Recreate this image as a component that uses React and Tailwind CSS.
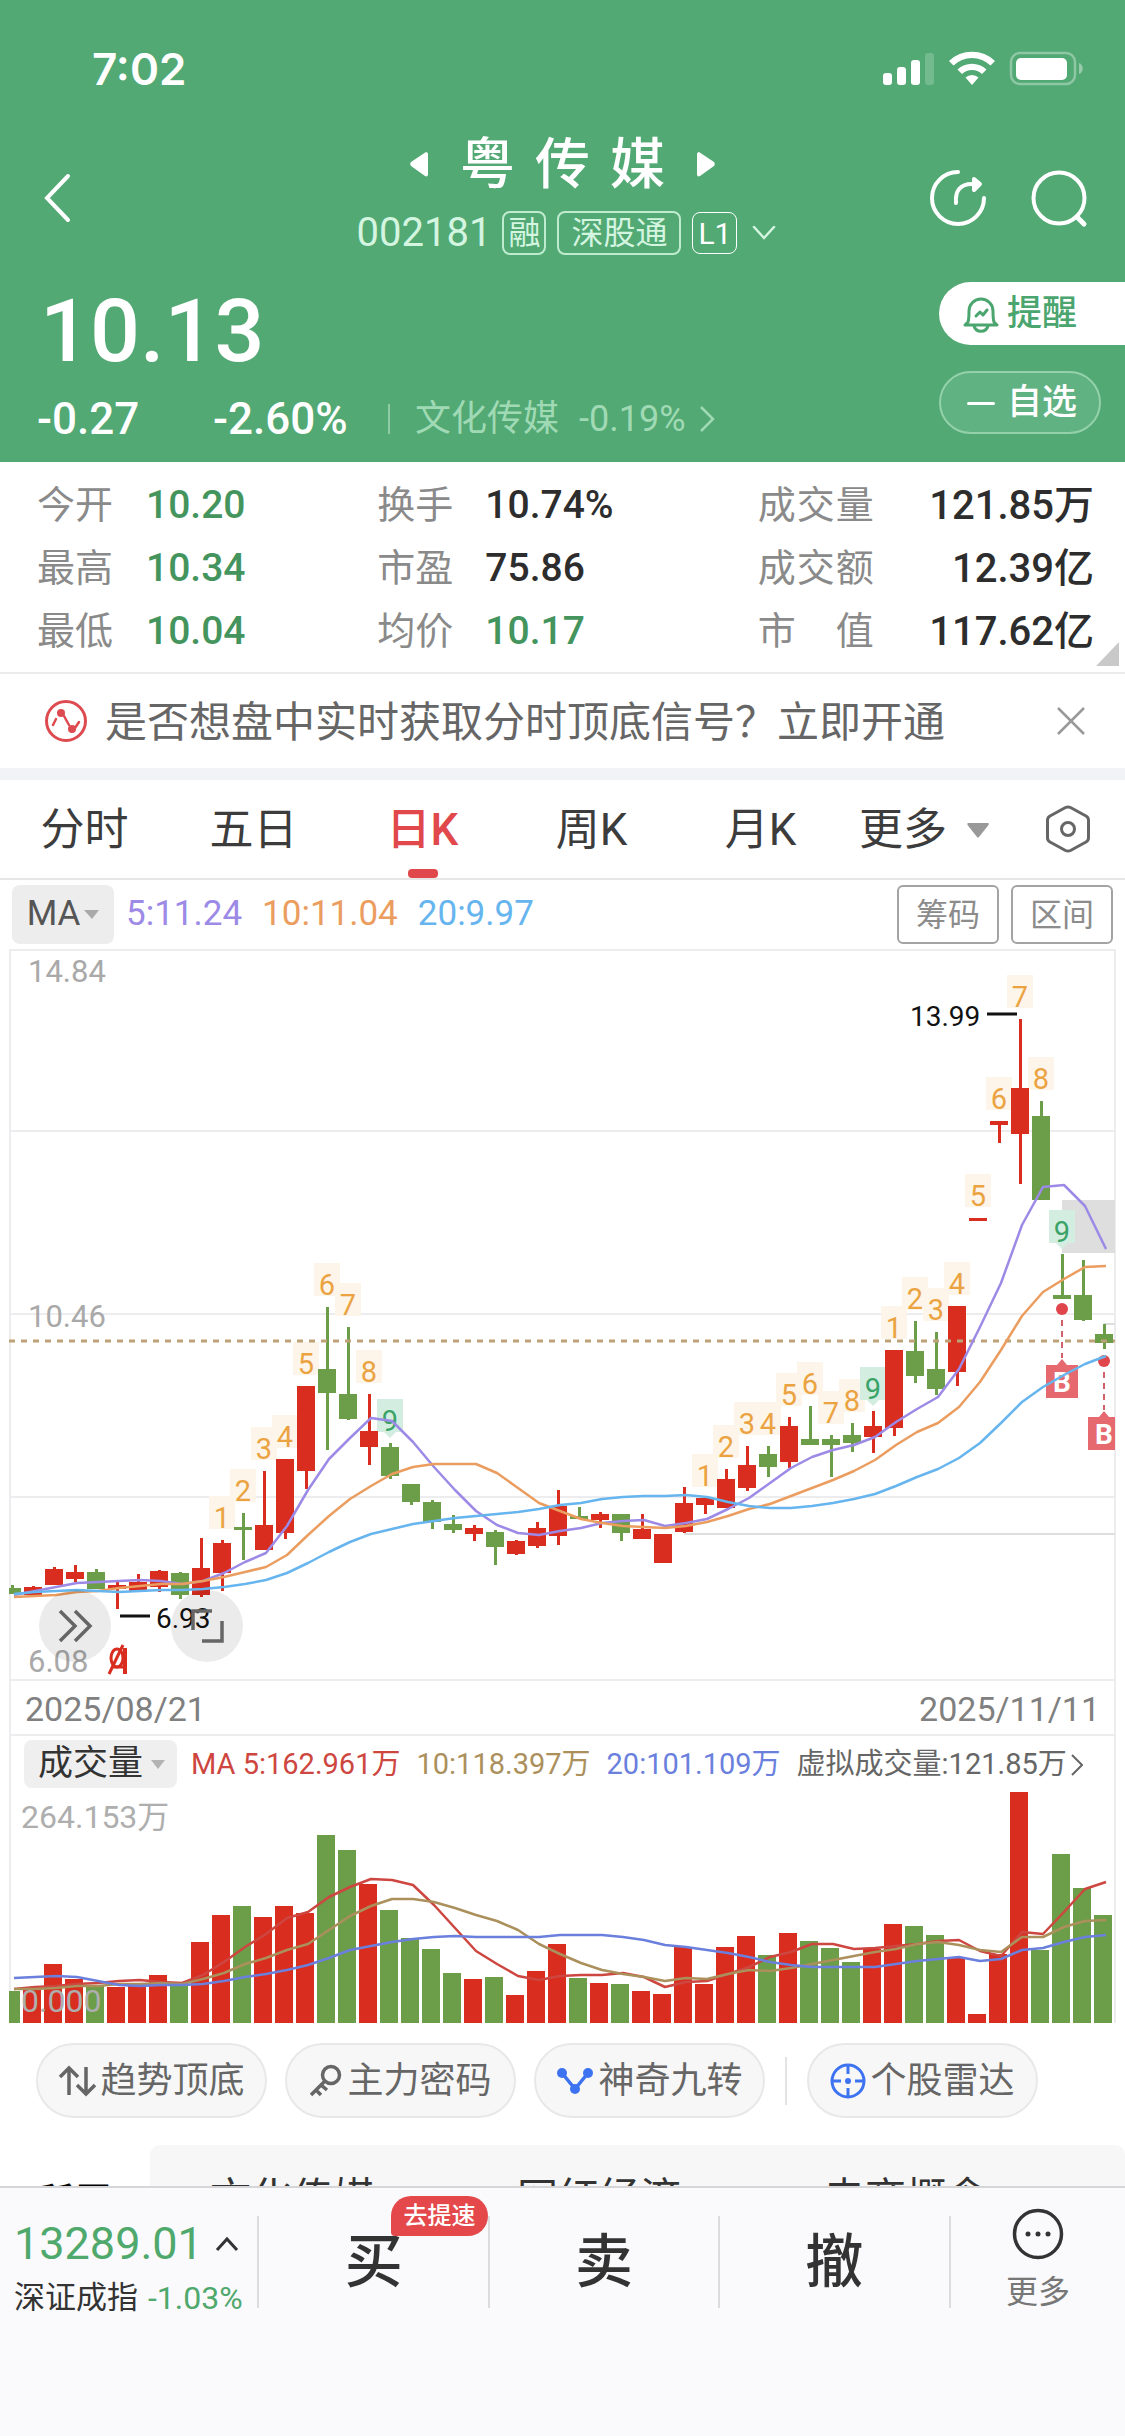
import React from "react";

const UP = "#d92d20";
const DOWN = "#6c9d48";

// [high, body top, body bottom, low, rising]
const candles = [
  [645, 648, 654, 654, 0],
  [646, 647, 655, 655, 1],
  [627, 629, 645, 645, 1],
  [625, 632, 639, 642, 1],
  [629, 632, 649, 649, 0],
  [642, 645, 649, 669, 1],
  [634, 642, 651, 651, 1],
  [630, 631, 647, 652, 1],
  [632, 633, 655, 659, 0],
  [598, 628, 655, 657, 1],
  [600, 603, 633, 651, 1],
  [573, 587, 590, 620, 0],
  [531, 585, 610, 610, 1],
  [519, 519, 593, 599, 1],
  [446, 446, 531, 549, 1],
  [367, 429, 453, 510, 0],
  [387, 454, 479, 480, 0],
  [454, 491, 507, 525, 1],
  [503, 507, 536, 539, 0],
  [544, 544, 562, 565, 0],
  [560, 562, 582, 589, 0],
  [575, 584, 590, 593, 0],
  [585, 588, 594, 601, 1],
  [590, 592, 607, 625, 0],
  [600, 601, 614, 615, 1],
  [582, 588, 606, 608, 1],
  [550, 566, 596, 605, 1],
  [567, 576, 579, 579, 0],
  [572, 574, 580, 588, 1],
  [574, 574, 593, 601, 0],
  [574, 589, 599, 599, 1],
  [594, 594, 623, 623, 1],
  [547, 563, 592, 593, 1],
  [558, 558, 565, 574, 1],
  [529, 539, 568, 568, 1],
  [506, 525, 548, 551, 1],
  [506, 514, 527, 537, 0],
  [477, 486, 522, 528, 1],
  [466, 499, 505, 505, 0],
  [495, 499, 505, 537, 0],
  [483, 495, 503, 512, 0],
  [471, 486, 497, 513, 1],
  [410, 410, 488, 496, 1],
  [381, 411, 436, 443, 0],
  [392, 429, 449, 455, 0],
  [366, 366, 432, 446, 1],
  [278, 278, 281, 281, 1],
  [181, 181, 185, 203, 1],
  [79, 148, 194, 244, 1],
  [161, 176, 260, 260, 0],
  [314, 355, 359, 359, 0],
  [320, 355, 380, 381, 0],
  [384, 394, 403, 409, 0],
];

const ma5 = [
  655, 651, 647, 643, 642, 641, 640, 641, 644, 641, 633, 622, 613, 586, 550,
  519, 498, 478, 481, 502, 527, 550, 571, 585, 593, 595, 591, 588, 583, 581,
  580, 586, 583, 579, 569, 558, 543, 528, 517, 510, 505, 497, 482, 469, 457,
  429, 387, 343, 285, 247, 245, 266, 309,
];
const ma10 = [
  657, 656, 655, 652, 651, 648, 646, 644, 644, 641, 637, 632, 627, 615, 595,
  576, 559, 546, 534, 527, 524, 524, 524, 533, 548, 563, 571, 579, 583, 586,
  587, 588, 586, 582, 576, 569, 564, 556, 548, 540, 531, 520, 505, 492, 483,
  467, 442, 410, 376, 352, 339, 327, 326,
];
const ma20 = [
  654, 652, 651, 650, 651, 652, 651, 650, 650, 649, 647, 644, 640, 633, 623,
  612, 602, 594, 589, 584, 581, 578, 576, 574, 572, 569, 565, 563, 559, 557,
  556, 556, 555, 557, 562, 566, 568, 568, 566, 563, 559, 554, 546, 537, 529,
  518, 503, 483, 462, 447, 435, 424, 416,
];

// index of the first candle of each nine-turn sequence
const sequences = [10, 33, 42];

const volumes = [
  291, 287, 264, 279, 286, 287, 286, 275, 286, 242, 215, 206, 217, 206, 213,
  135, 150, 184, 210, 238, 249, 273, 279, 277, 295, 271, 244, 278, 283, 284,
  291, 294, 247, 284, 247, 236, 255, 233, 241, 248, 262, 249, 224, 226, 235,
  258, 314, 254, 92, 250, 154, 188, 215,
];
const vol5 = [
  289, 287, 286, 284, 283, 281, 280, 282, 283, 275, 262, 247, 234, 218, 212,
  197, 187, 179, 180, 185, 205, 228, 251, 264, 276, 280, 276, 275, 275, 273,
  277, 287, 282, 281, 274, 267, 257, 252, 244, 244, 249, 248, 246, 244, 241,
  240, 251, 256, 232, 234, 212, 189, 182,
];
const vol10 = [
  289, 289, 288, 286, 286, 284, 284, 283, 284, 279, 273, 264, 258, 250, 244,
  230, 216, 206, 199, 199, 202, 208, 215, 221, 230, 244, 254, 263, 270, 274,
  277, 281, 278, 279, 274, 270, 271, 268, 264, 260, 256, 252, 249, 244, 242,
  245, 250, 252, 237, 237, 227, 221, 220,
];
const vol20 = [
  278, 277, 276, 277, 281, 285, 286, 285, 285, 284, 281, 277, 274, 270, 265,
  258, 250, 246, 242, 239, 237, 236, 237, 237, 237, 237, 235, 235, 235, 237,
  240, 245, 247, 250, 253, 257, 262, 265, 267, 267, 267, 267, 264, 261, 259,
  257, 261, 259, 250, 248, 242, 237, 235,
];

const stats = [
  ["今开", "10.20", "换手", "10.74%", "成交量", "121.85万"],
  ["最高", "10.34", "市盈", "75.86", "成交额", "12.39亿"],
  ["最低", "10.04", "均价", "10.17", "市值", "117.62亿"],
];

function MaLine({ values, color }) {
  return (
    <polyline
      points={values.map((y, i) => `${14 + i * 21},${y}`).join(" ")}
      fill="none"
      stroke={color}
      strokeWidth="2.5"
      strokeLinejoin="round"
    />
  );
}

function StatusBar() {
  return (
    <div className="flex h-[130px] items-center justify-between pt-2 pr-10 pl-[92px]">
      <span className="font-['Inter',sans-serif] text-[44px] leading-none font-semibold">
        7:02
      </span>
      <svg width="202" height="36" viewBox="0 0 202 36" fill="#fff">
        <rect x="0" y="22" width="9" height="12" rx="3" />
        <rect x="14" y="16" width="9" height="18" rx="3" />
        <rect x="28" y="9" width="9" height="25" rx="3" />
        <rect x="42" y="2" width="9" height="32" rx="3" opacity="0.2" />
        <path d="M66 10a33 33 0 0 1 46 0l-4.500 4.500a26.500 26.500 0 0 0-37 0z" />
        <path d="M74.500 18.500a21 21 0 0 1 29 0l-4.500 4.500a14.500 14.500 0 0 0-20 0z" />
        <path d="M82.500 26.500a9.500 9.500 0 0 1 13 0L89 34z" />
        <rect
          x="128"
          y="2"
          width="64"
          height="31"
          rx="9"
          fill="none"
          stroke="#fff"
          strokeWidth="2.500"
          opacity="0.35"
        />
        <rect x="133" y="7" width="51" height="22" rx="5" />
        <path d="M196 12c5 1.500 5 9.500 0 11z" opacity="0.4" />
      </svg>
    </div>
  );
}

function Header() {
  return (
    <header className="bg-[#52a974] text-white">
      <StatusBar />
      <div className="grid h-[136px] grid-cols-[1fr_auto_1fr] items-center">
        <button aria-label="返回" className="ml-10 w-9">
          <svg width="36" height="52" viewBox="0 0 36 52" fill="none">
            <path
              d="M28 4 7 26l21 22"
              stroke="#fff"
              strokeWidth="4"
              strokeLinecap="round"
            />
          </svg>
        </button>
        <div className="flex flex-col items-center gap-4 pb-2">
          <div className="flex items-center gap-8">
            <button aria-label="上一只">
              <svg width="18" height="26" viewBox="0 0 18 26" fill="#fff">
                <path d="M16 1c1 0 2 1 2 2v20c0 2-1 3-3 2L1 15c-1-1-1-3 0-4z" />
              </svg>
            </button>
            <h1 className="flex gap-5 text-[55px] leading-[62px] font-medium">
              <span>粤</span>
              <span>传</span>
              <span>媒</span>
            </h1>
            <button aria-label="下一只">
              <svg width="18" height="26" viewBox="0 0 18 26" fill="#fff">
                <path d="M2 1C1 1 0 2 0 3v20c0 2 1 3 3 2l14-10c1-1 1-3 0-4z" />
              </svg>
            </button>
          </div>
          <div className="flex h-11 items-center gap-[11px] pl-2 text-[32px] text-[#d4f5e0]">
            <span className="text-[40px]">002181</span>
            <span className="flex h-11 w-11 items-center justify-center rounded-lg border-2 border-[#bfeccf]">
              融
            </span>
            <span className="flex h-11 items-center rounded-lg border-2 border-[#bfeccf] px-3">
              深股通
            </span>
            <span className="flex h-[42px] w-[45px] items-center justify-center rounded-lg border border-white text-[30px] text-white">
              L1
            </span>
            <button aria-label="展开" className="ml-1">
              <svg width="24" height="16" viewBox="0 0 24 16" fill="none">
                <path
                  d="m2 2 10 11L22 2"
                  stroke="#d4f5e0"
                  strokeWidth="2.500"
                  strokeLinecap="round"
                />
              </svg>
            </button>
          </div>
        </div>
        <div className="flex items-center justify-end gap-11 pr-[37px]">
          <button aria-label="分享">
            <svg
              width="58"
              height="60"
              viewBox="0 0 58 60"
              fill="none"
              stroke="#fff"
              strokeWidth="4"
              strokeLinecap="round"
              strokeLinejoin="round"
            >
              <path d="M30 4a26 26 0 1 0 26 26" />
              <path d="M28 35c-1-12 4-19 16-19h6" />
              <path d="m46 11 6 5-6 6z" fill="#fff" />
            </svg>
          </button>
          <button aria-label="搜索">
            <svg
              width="58"
              height="60"
              viewBox="0 0 58 60"
              fill="none"
              stroke="#fff"
              strokeLinecap="round"
            >
              <circle cx="29" cy="30" r="25.500" strokeWidth="4" />
              <path d="m47 49 7 7" strokeWidth="5" />
            </svg>
          </button>
        </div>
      </div>

      <div className="flex justify-between pt-4 pb-[18px]">
        <div>
          <div className="pl-10 text-[88px] leading-[98px] font-medium">
            10.13
          </div>
          <div className="mt-[14px] flex h-[50px] items-center pl-[37px] text-[44px] font-medium">
            <span className="w-[176px]">-0.27</span>
            <span className="w-[175px]">-2.60%</span>
            <a
              href="#sector"
              className="flex items-center text-[36px] font-normal text-[#a0dab5]"
            >
              <span className="mr-[25px] h-[30px] w-[2px] bg-[#8fcca6]"></span>
              文化传媒
              <span className="ml-5">-0.19%</span>
              <svg
                className="ml-3"
                width="18"
                height="30"
                viewBox="0 0 18 30"
                fill="none"
              >
                <path d="m3 3 12 12L3 27" stroke="#a0dab5" strokeWidth="2.500" />
              </svg>
            </a>
          </div>
        </div>
        <div className="flex w-[186px] flex-col gap-[26px]">
          <button className="flex h-[63px] items-center gap-2 rounded-l-full bg-white pt-[2px] pl-6 text-[35px] font-medium text-[#4aa56e]">
            <svg
              width="36"
              height="38"
              viewBox="0 0 36 38"
              fill="none"
              stroke="#4aa56e"
              strokeWidth="3"
              strokeLinecap="round"
              strokeLinejoin="round"
            >
              <path d="M5 26c1-3 1-6 1-11a12 12 0 0 1 24 0c0 5 0 8 1 11l3 3H2z" />
              <path d="M11 30c2 7 12 7 14 0M13 20l4-4 3 3 4-5" />
            </svg>
            提醒
          </button>
          <button className="flex h-[63px] w-[162px] items-center gap-3 rounded-full border-2 border-[#93d1aa] bg-[#60b282] pt-[2px] pl-[26px] text-[35px] font-medium">
            <span className="h-[3px] w-7 rounded bg-white"></span>
            自选
          </button>
        </div>
      </div>
    </header>
  );
}

function Stats() {
  return (
    <dl className="relative border-b-2 border-[#ebebeb] pt-3 pr-[31px] pb-[9px] pl-[37px]">
      {stats.map(([a, av, b, bv, c, cv], i) => (
        <div
          key={a}
          className="grid h-[63px] grid-cols-[340fr_380fr_336fr] items-center text-[40px] font-medium text-[#2d2d2d]"
        >
          <div className="flex items-center">
            <dt className="w-[109px] text-[38px] font-normal text-[#8a8a8a]">
              {a}
            </dt>
            <dd className="text-[39px] text-[#44945e]">{av}</dd>
          </div>
          <div className="flex items-center text-[39px]">
            <dt className="w-[108px] text-[38px] font-normal text-[#8a8a8a]">
              {b}
            </dt>
            <dd className={i === 2 ? "text-[#44945e]" : ""}>{bv}</dd>
          </div>
          <div className="flex items-center justify-between">
            <dt className="flex w-[116px] justify-between text-[38px] font-normal text-[#8a8a8a]">
              {c.split("").map((ch) => (
                <span key={ch}>{ch}</span>
              ))}
            </dt>
            <dd>{cv}</dd>
          </div>
        </div>
      ))}
      <svg
        className="absolute right-[6px] bottom-[6px]"
        width="23"
        height="24"
        viewBox="0 0 23 24"
      >
        <path d="M23 0v24H0z" fill="#c9c9c9" />
      </svg>
    </dl>
  );
}

function Notice() {
  return (
    <div className="flex h-[94px] items-center pr-[38px] pl-11">
      <svg width="44" height="44" viewBox="0 0 44 44" fill="none">
        <circle cx="22" cy="22" r="19.500" stroke="#dd4a4f" strokeWidth="3" />
        <path
          d="m9 26 3-6M20 17l5 9M31 29l4-6"
          stroke="#dd4a4f"
          strokeWidth="2.500"
          strokeLinecap="round"
        />
        <circle cx="17" cy="14" r="4" fill="#dd4a4f" />
        <circle cx="28" cy="30" r="4" fill="#dd4a4f" />
      </svg>
      <a href="#open" className="ml-[17px] flex-1 pt-[2px] text-[42px] text-[#666]">
        是否想盘中实时获取分时顶底信号？立即开通
      </a>
      <button aria-label="关闭">
        <svg width="32" height="32" viewBox="0 0 32 32" fill="none">
          <path d="m3 3 26 26M29 3 3 29" stroke="#999" strokeWidth="2.500" />
        </svg>
      </button>
    </div>
  );
}

function Tabs() {
  return (
    <nav className="grid h-[100px] grid-cols-[845fr_280fr] border-b-2 border-[#e6e6e6] text-[44px] text-[#3c3c3c]">
      <div className="grid grid-cols-5">
        {["分时", "五日", "日K", "周K", "月K"].map((tab) =>
          tab === "日K" ? (
            <button
              key={tab}
              className="relative pt-[2px] font-medium text-[#e0484b]"
            >
              {tab}
              <span className="absolute bottom-0 left-1/2 h-[9px] w-[30px] -translate-x-1/2 rounded bg-[#e0484b]"></span>
            </button>
          ) : (
            <button key={tab} className="pt-[2px]">
              {tab}
            </button>
          )
        )}
      </div>
      <div className="flex items-center justify-between pr-8 pl-[14px]">
        <button className="flex items-center gap-5 pt-[2px]">
          更多
          <svg width="22" height="15" viewBox="0 0 22 15" fill="#999">
            <path d="M1 0h20c1 0 1 1 .5 2L12 14q-1 1-2 0L.5 2Q0 0 1 0" />
          </svg>
        </button>
        <button aria-label="设置">
          <svg
            width="50"
            height="50"
            viewBox="0 0 50 50"
            fill="none"
            stroke="#666"
            strokeWidth="3"
            strokeLinejoin="round"
          >
            <path d="M22.500 3.500q2.500-1.200 5 0L43 12q2.500 1.500 2.500 4v18q0 2.500-2.500 4l-15.500 8.500q-2.500 1.200-5 0L7 38q-2.500-1.500-2.500-4V16q0-2.500 2.500-4z" />
            <circle cx="25" cy="25" r="6.500" />
          </svg>
        </button>
      </div>
    </nav>
  );
}

function TurnLabel({ x, high, n }) {
  const last = n === 9;
  return (
    <>
      <rect
        x={x - 13}
        y={high - 44}
        width="26"
        height="33"
        fill={last ? "#d3eee0" : "#fdf5e9"}
      />
      {last && (
        <path
          d={`M${x - 6} ${high - 11}h12l-6 6z`}
          fill="#d3eee0"
        />
      )}
      <text
        x={x}
        y={high - 12}
        fontSize="29"
        textAnchor="middle"
        fill={last ? "#3ba368" : "#eba342"}
      >
        {n}
      </text>
    </>
  );
}

function BuyMark({ x, y }) {
  return (
    <>
      <circle cx={x} cy={y} r="6" fill="#e0454c" />
      <path
        d={`M${x} ${y + 11}v38`}
        stroke="#d0606a"
        strokeWidth="2"
        strokeDasharray="6 5"
      />
      <path
        d={`M${x - 16} ${y + 56}h11l5-6 5 6h11v33h-32z`}
        fill="#e5696e"
      />
      <text
        x={x}
        y={y + 83}
        fontSize="28"
        fontWeight="700"
        textAnchor="middle"
        fill="#fff"
      >
        B
      </text>
    </>
  );
}

function PriceChart() {
  return (
    <div className="relative">
      <svg viewBox="0 8 1125 734" className="block w-full">
        <clipPath id="plot">
          <rect x="9" y="8" width="1106" height="734" />
        </clipPath>
        <g stroke="#ededef" strokeWidth="2">
          {[10, 191, 374, 557, 740].map((y) => (
            <path key={y} d={`M10 ${y}H1115`} />
          ))}
          <path d="M10 9V742M1115 9V742" />
          <path d="M684 594H1115M1104 384H1115" stroke="#dedede" />
        </g>
        <rect x="1062" y="260" width="53" height="53" fill="#dededf" />
        <g clipPath="url(#plot)">
          {sequences.map((start) =>
            [1, 2, 3, 4, 5, 6, 7, 8, 9].map((n) => {
              const i = start + n - 1;
              return (
                <TurnLabel key={i} x={12 + i * 21} high={candles[i][0]} n={n} />
              );
            })
          )}
          {candles.map(([high, top, bottom, low, rising], i) => (
            <g key={i} fill={rising ? UP : DOWN}>
              <rect x={11 + i * 21} y={high} width="3" height={low - high} />
              <rect x={3 + i * 21} y={top} width="18" height={bottom - top} />
            </g>
          ))}
          <path
            d="M9 401H1115"
            stroke="#bda177"
            strokeWidth="3"
            strokeDasharray="6 6"
          />
          <BuyMark x={1062} y={369} />
          <BuyMark x={1104} y={421} />
        </g>
        <MaLine values={ma5} color="#9c8ae6" />
        <MaLine values={ma10} color="#eb9d60" />
        <MaLine values={ma20} color="#66b5ee" />

        <path d="M987 74h30M120 676h30" stroke="#111" strokeWidth="3" />
        <g fontSize="28" fill="#111">
          <text x="910" y="86">
            13.99
          </text>
          <text x="156" y="688">
            6.93
          </text>
        </g>
        <g fontSize="31" fill="#a9a9a9">
          <text x="28" y="42">
            14.84
          </text>
          <text x="28" y="387">
            10.46
          </text>
          <text x="28" y="732">
            6.08
          </text>
        </g>
        <g fill="none" stroke={UP} strokeWidth="3">
          <ellipse cx="117" cy="718" rx="6" ry="9" />
          <path d="M125 708v26" strokeWidth="4" />
          <path d="m123 705-14 29M112 727h13" />
        </g>
      </svg>
      <button
        aria-label="快进"
        className="absolute bottom-5 left-[39px] flex h-[72px] w-[72px] items-center justify-center rounded-full bg-black/8"
      >
        <svg
          width="36"
          height="36"
          viewBox="0 0 36 36"
          fill="none"
          stroke="#666"
          strokeWidth="3.500"
        >
          <path d="m3 3 15 15L3 33M18 3l15 15-15 15" />
        </svg>
      </button>
      <button
        aria-label="全屏"
        className="absolute bottom-5 left-[171px] flex h-[72px] w-[72px] items-center justify-center rounded-full bg-black/8"
      >
        <svg
          width="36"
          height="36"
          viewBox="0 0 36 36"
          fill="none"
          stroke="#666"
          strokeWidth="3.500"
        >
          <path d="M23 3H4v19M13 33h20V13" />
        </svg>
      </button>
    </div>
  );
}

function VolumeChart() {
  return (
    <svg viewBox="0 92 1125 232" className="block w-full">
      <path d="M10 92V323M1115 92V323" stroke="#ededef" strokeWidth="2" />
      <clipPath id="volume">
        <rect x="9" y="92" width="1106" height="232" />
      </clipPath>
      <g clipPath="url(#volume)">
        {volumes.map((y, i) => (
          <rect
            key={i}
            x={2 + i * 21}
            y={y}
            width="18"
            height={323 - y}
            fill={candles[i][4] ? UP : DOWN}
          />
        ))}
      </g>
      <MaLine values={vol5} color="#cd4640" />
      <MaLine values={vol10} color="#ab905c" />
      <MaLine values={vol20} color="#6b7fdd" />
      <g fontSize="32" fill="#aeaeae">
        <text x="21" y="128">
          264.153万
        </text>
        <text x="21" y="312">
          0.000
        </text>
      </g>
    </svg>
  );
}

function Indicators() {
  return (
    <section>
      <div className="flex h-[68px] items-start justify-between pt-[5px] pr-3 pl-3">
        <div className="flex items-center gap-5 text-[35px]">
          <button className="-mr-2 flex h-[59px] w-[102px] items-center justify-center gap-1 rounded-lg bg-[#ededed] text-[#555]">
            MA
            <svg width="15" height="9" viewBox="0 0 15 9" fill="#aaa">
              <path d="M0 0h15L8 9z" />
            </svg>
          </button>
          <span className="text-[#9c8ae6]">5:11.24</span>
          <span className="text-[#eb9d60]">10:11.04</span>
          <span className="text-[#66b5ee]">20:9.97</span>
        </div>
        <div className="flex gap-3 text-[32px] text-[#8c8c8c]">
          <button className="h-[59px] w-[102px] rounded-md border-2 border-[#a3a3a3]">
            筹码
          </button>
          <button className="h-[59px] w-[102px] rounded-md border-2 border-[#a3a3a3]">
            区间
          </button>
        </div>
      </div>
      <PriceChart />
      <div className="mx-[9px] flex h-[54px] items-center justify-between border-x-2 border-b-2 border-[#ededef] px-[14px] pt-[2px] text-[34px] text-[#808080]">
        <span>2025/08/21</span>
        <span>2025/11/11</span>
      </div>
      <div className="mx-[9px] flex h-14 items-center gap-4 border-x-2 border-[#ededef] pl-[13px] text-[29px] whitespace-nowrap">
        <button className="-mr-[2px] flex h-12 items-center gap-2 rounded-lg bg-[#efefef] pr-3 pl-[14px] text-[35px] text-[#333]">
          成交量
          <svg width="14" height="9" viewBox="0 0 14 9" fill="#b3b3b3">
            <path d="M0 0h14L7 9z" />
          </svg>
        </button>
        <span className="pt-[2px] text-[#cd4640]">MA 5:162.961万</span>
        <span className="pt-[2px] text-[#ab905c]">10:118.397万</span>
        <span className="pt-[2px] text-[#6b7fdd]">20:101.109万</span>
        <a href="#virtual" className="flex items-center gap-1 pt-[2px] text-[#666]">
          虚拟成交量:121.85万
          <svg width="12" height="22" viewBox="0 0 12 22" fill="none">
            <path d="m1 1 10 10L1 21" stroke="#666" strokeWidth="2" />
          </svg>
        </a>
      </div>
      <VolumeChart />
    </section>
  );
}

function Pill({ icon, children }) {
  return (
    <button className="flex h-[75px] w-[231px] items-center justify-center gap-1 rounded-full border-2 border-[#e8e8e8] bg-[#f7f7f7] text-[#666]">
      {icon}
      {children}
    </button>
  );
}

function Shortcuts() {
  return (
    <div className="flex items-center gap-[18px] pt-[19px] pl-9 text-[36px]">
      <Pill
        icon={
          <svg
            width="38"
            height="32"
            viewBox="0 0 38 32"
            fill="none"
            stroke="#666"
            strokeWidth="3.5"
          >
            <path d="M11 30V3M2 12l9-9 9 9M28 2v27M19 20l9 9 9-9" />
          </svg>
        }
      >
        趋势顶底
      </Pill>
      <Pill
        icon={
          <svg
            width="34"
            height="34"
            viewBox="0 0 34 34"
            fill="none"
            stroke="#666"
            strokeWidth="3.5"
          >
            <circle cx="22" cy="11" r="8.500" />
            <path d="M16 17 2 31M12 21l6 5M7 26l5 5" />
          </svg>
        }
      >
        主力密码
      </Pill>
      <Pill
        icon={
          <svg width="38" height="28" viewBox="0 0 38 28" fill="#3d73f0">
            <path
              d="m6 6 13 16L32 6"
              fill="none"
              stroke="#3d73f0"
              strokeWidth="3.5"
            />
            <circle cx="6" cy="6" r="5" />
            <circle cx="19" cy="22" r="5" />
            <circle cx="32" cy="6" r="5" />
          </svg>
        }
      >
        神奇九转
      </Pill>
      <span className="mx-[2px] h-12 w-[2px] bg-[#e3e3e3]"></span>
      <Pill
        icon={
          <svg
            width="36"
            height="36"
            viewBox="0 0 36 36"
            fill="none"
            stroke="#3d73f0"
            strokeWidth="3"
          >
            <circle cx="18" cy="18" r="16" />
            <path d="M18 2v9M18 25v9M2 18h9M25 18h9" />
            <circle cx="18" cy="18" r="3" fill="#3d73f0" stroke="none" />
          </svg>
        }
      >
        个股雷达
      </Pill>
    </div>
  );
}

function Concepts() {
  return (
    <div className="mt-[27px] flex h-[41px] overflow-hidden text-[41px] text-[#333]">
      <span className="w-[150px] pt-[35px] pl-9 text-[38px] leading-[44px] font-bold text-black">
        所属
      </span>
      <div className="grid h-[120px] flex-1 grid-cols-[307fr_307fr_361fr] rounded-[10px] bg-[#f7f7f8] pt-[31px] leading-[44px]">
        <span className="pl-[60px]">文化传媒</span>
        <span className="pl-[60px]">网红经济</span>
        <span className="pl-[60px]">电商概念</span>
      </div>
    </div>
  );
}

function TradeBar() {
  return (
    <footer className="flex h-[250px] items-start border-t-2 border-[#d6d6d8] bg-[#fafafc] pt-7 text-[#333]">
      <button className="flex h-[101px] w-[257px] flex-col justify-between pl-[14px] text-left whitespace-nowrap">
        <span className="flex items-center gap-3 text-[45px] leading-[56px] text-[#4fa86c]">
          13289.01
          <svg width="24" height="16" viewBox="0 0 24 16" fill="none">
            <path d="m2 14 10-11 10 11" stroke="#333" strokeWidth="3" />
          </svg>
        </span>
        <span className="flex items-center gap-[10px] text-[31px] leading-[38px]">
          深证成指
          <span className="text-[32px] text-[#4fa86c]">-1.03%</span>
        </span>
      </button>
      <div className="grid flex-[694] grid-cols-3 text-[58px] leading-[92px] font-medium">
        <button className="relative border-l-2 border-[#dcdcde]">
          买
          <span className="absolute -top-5 left-[132px] flex h-10 w-[97px] items-center justify-center rounded-[20px] rounded-bl-sm bg-[#e5484b] text-[24px] leading-none text-white">
            去提速
          </span>
        </button>
        <button className="border-x-2 border-[#dcdcde]">卖</button>
        <button className="border-r-2 border-[#dcdcde]">撤</button>
      </div>
      <button className="flex h-[94px] flex-[174] flex-col items-center justify-between text-[32px] leading-[36px] text-[#777]">
        <svg
          className="-mt-2"
          width="52"
          height="52"
          viewBox="0 0 52 52"
          fill="#333"
        >
          <circle
            cx="26"
            cy="26"
            r="23.500"
            fill="none"
            stroke="#333"
            strokeWidth="3.500"
          />
          <circle cx="16" cy="26" r="2.500" />
          <circle cx="26" cy="26" r="2.500" />
          <circle cx="36" cy="26" r="2.500" />
        </svg>
        更多
      </button>
    </footer>
  );
}

function App() {
  return (
    <div className="min-h-screen w-full bg-white font-['Roboto','Noto_Sans_CJK_SC',sans-serif]">
      <Header />
      <main>
        <Stats />
        <Notice />
        <div className="h-3 bg-[#f2f3f7]"></div>
        <Tabs />
        <Indicators />
        <Shortcuts />
        <Concepts />
      </main>
      <TradeBar />
    </div>
  );
}

export default App;
